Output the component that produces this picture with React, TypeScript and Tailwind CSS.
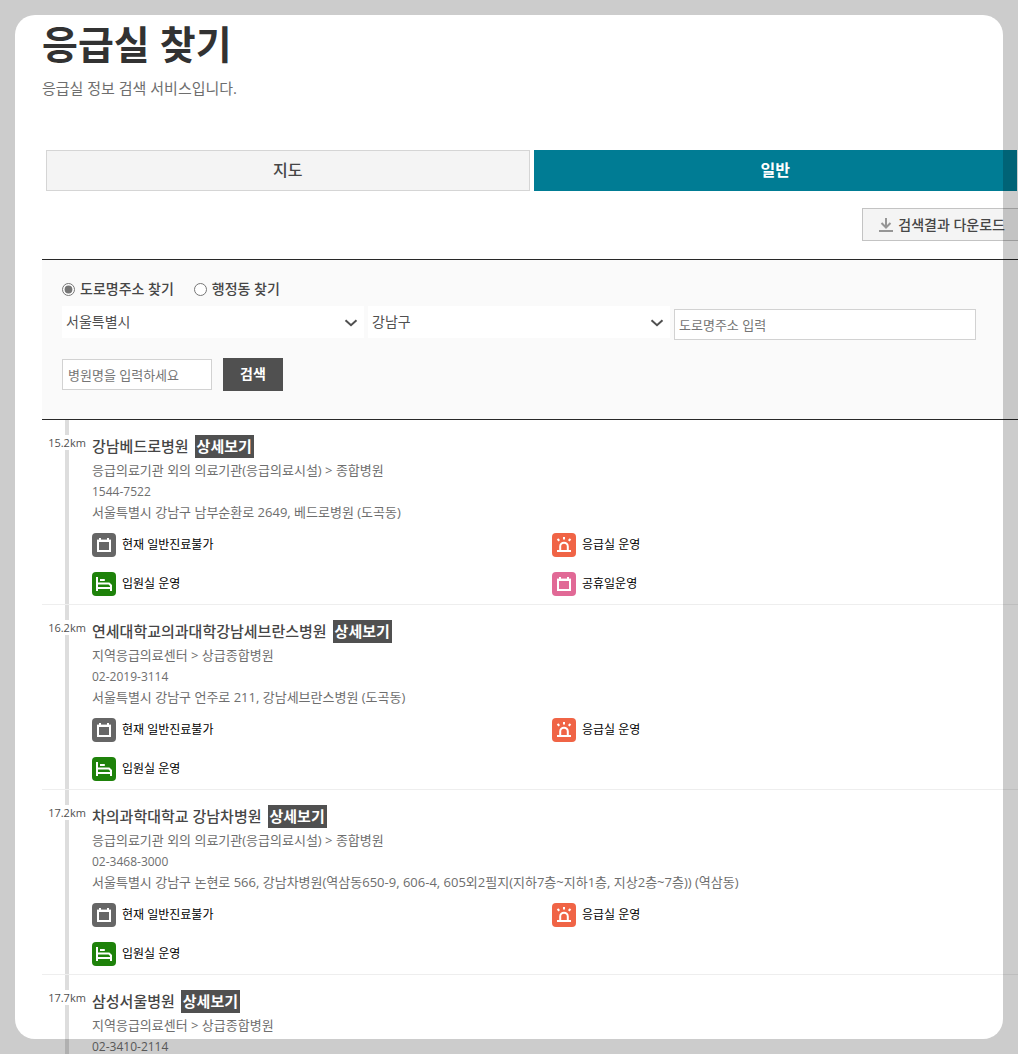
import React, { useState } from 'react';

type ServiceKind = 'closed' | 'emergency' | 'ward' | 'holiday';

interface Hospital {
  id: number;
  distance: string;
  name: string;
  category: string;
  phone: string;
  address: string;
  services: ServiceKind[];
}

const hospitals: Hospital[] = [
  {
    id: 1,
    distance: '15.2km',
    name: '강남베드로병원',
    category: '응급의료기관 외의 의료기관(응급의료시설) > 종합병원',
    phone: '1544-7522',
    address: '서울특별시 강남구 남부순환로 2649, 베드로병원 (도곡동)',
    services: ['closed', 'emergency', 'ward', 'holiday'],
  },
  {
    id: 2,
    distance: '16.2km',
    name: '연세대학교의과대학강남세브란스병원',
    category: '지역응급의료센터 > 상급종합병원',
    phone: '02-2019-3114',
    address: '서울특별시 강남구 언주로 211, 강남세브란스병원 (도곡동)',
    services: ['closed', 'emergency', 'ward'],
  },
  {
    id: 3,
    distance: '17.2km',
    name: '차의과학대학교 강남차병원',
    category: '응급의료기관 외의 의료기관(응급의료시설) > 종합병원',
    phone: '02-3468-3000',
    address: '서울특별시 강남구 논현로 566, 강남차병원(역삼동650-9, 606-4, 605외2필지(지하7층~지하1층, 지상2층~7층)) (역삼동)',
    services: ['closed', 'emergency', 'ward'],
  },
  {
    id: 4,
    distance: '17.7km',
    name: '삼성서울병원',
    category: '지역응급의료센터 > 상급종합병원',
    phone: '02-3410-2114',
    address: '서울특별시 강남구 일원로 81 (일원동)',
    services: ['closed', 'emergency', 'ward'],
  },
];

const services: Record<ServiceKind, { label: string; color: string }> = {
  closed: { label: '현재 일반진료불가', color: 'bg-[#666666]' },
  emergency: { label: '응급실 운영', color: 'bg-[#f06446]' },
  ward: { label: '입원실 운영', color: 'bg-[#1e820a]' },
  holiday: { label: '공휴일운영', color: 'bg-[#e16996]' },
};

function ServiceIcon({ kind }: { kind: ServiceKind }) {
  return (
    <span className={`w-6 h-6 rounded shrink-0 ${services[kind].color}`}>
      <svg viewBox="0 0 24 24" className="w-6 h-6" fill="none" stroke="#fff" strokeWidth="2" aria-hidden="true">
        {(kind === 'closed' || kind === 'holiday') && (
          <>
            <path d="M6 8h12v10H6z" />
            <path d="M5 7.8h14" strokeWidth="2.4" />
            <path d="M8 5v3M16 5v3" />
          </>
        )}
        {kind === 'emergency' && (
          <>
            <path d="M5 18h14" />
            <path d="M8.2 18v-4.5a3.8 3.8 0 0 1 7.6 0V18" />
            <path d="M12 4v2.5M5.5 6l1.8 1.8M18.5 6l-1.8 1.8" />
          </>
        )}
        {kind === 'ward' && (
          <>
            <path d="M5 5v14M5 16h14" />
            <path d="M5 11.5h12l2 2V19" />
            <path d="M8 8h4.8" />
          </>
        )}
      </svg>
    </span>
  );
}

function RegionSelect({ label, options }: { label: string; options: string[] }) {
  return (
    <div className="relative h-8 bg-white">
      <select aria-label={label} className="w-full h-8 pl-1 pr-6 appearance-none bg-white text-sm text-[#505050]">
        {options.map((o) => (
          <option key={o}>{o}</option>
        ))}
      </select>
      <svg
        viewBox="0 0 14 8"
        className="absolute right-1.5 top-[13px] w-[14px] h-2 pointer-events-none"
        fill="none"
        stroke="#505050"
        strokeWidth="2"
        aria-hidden="true"
      >
        <path d="M1.5 1.2 7 6.2l5.5-5" />
      </svg>
    </div>
  );
}

function HospitalItem({ hospital }: { hospital: Hospital }) {
  return (
    <li className="flex border-b border-[#eeeeee]">
      {/* Distance rail */}
      <div className="w-[50px] shrink-0 flex flex-col items-center">
        <span className="w-1 h-[15px] bg-[#dddddd]" />
        <span className="h-[15px] text-[11px] leading-[15px] text-[#505050]">{hospital.distance}</span>
        <span className="w-1 flex-1 bg-[#dddddd]" />
      </div>

      <div className="flex-1 pt-[15px] pb-2 pr-[10px]">
        <div className="flex items-center gap-1.5 mb-0.5">
          <h2 className="text-[15px] leading-[23px] font-medium text-[#464646]">{hospital.name}</h2>
          <button className="h-[23px] px-0.5 bg-[#505050] text-white text-[15px] leading-[23px] font-bold cursor-pointer">
            상세보기
          </button>
        </div>
        <div className="text-[13px] leading-[21px] text-[#6e6e6e]">
          <p>{hospital.category}</p>
          <p className="text-xs leading-[21px]">{hospital.phone}</p>
          <p>{hospital.address}</p>
        </div>
        <ul className="mt-[10px] grid grid-cols-2 gap-y-[15px]">
          {hospital.services.map((kind) => (
            <li key={kind} className="flex items-center gap-1.5 text-xs text-black">
              <ServiceIcon kind={kind} />
              {services[kind].label}
            </li>
          ))}
        </ul>
      </div>
    </li>
  );
}

export default function App() {
  const [mode, setMode] = useState('road');

  return (
    <div className="h-screen overflow-x-hidden overflow-y-auto [scrollbar-width:none] bg-white font-['Open_Sans','Noto_Sans_CJK_KR',sans-serif]">
      <main className="ml-[42px] -mr-1">
        <header className="pt-5">
          <h1 className="text-[39px] leading-[48px] font-bold text-[#323232]">응급실 찾기</h1>
          <p className="mt-[10px] text-[15px] leading-5 text-[#6e6e6e]">응급실 정보 검색 서비스입니다.</p>
        </header>

        <div className="mt-[52px] pl-1 pr-[5px] flex gap-1" role="tablist">
          <button
            role="tab"
            aria-selected="false"
            className="flex-1 h-[41px] pb-0.5 bg-[#f4f4f4] border border-[#d5d5d5] text-base font-medium text-[#464646] cursor-pointer"
          >
            지도
          </button>
          <button
            role="tab"
            aria-selected="true"
            className="flex-1 h-[41px] pb-0.5 bg-[#007c94] border border-[#007c94] text-base font-bold text-white cursor-pointer"
          >
            일반
          </button>
        </div>

        <div className="mt-[17px] flex justify-end">
          <button className="h-[33px] px-4 flex items-center gap-[5px] bg-[#f4f4f4] border border-[#c3c3c3] text-sm font-medium text-[#464646] cursor-pointer">
            <svg viewBox="0 0 14 14" className="w-[14px] h-[14px]" fill="none" stroke="#969696" strokeWidth="2" aria-hidden="true">
              <path d="M7 0v9M2.5 5 7 9.5 11.5 5M0 13h14" />
            </svg>
            검색결과 다운로드
          </button>
        </div>

        <form
          className="mt-[18px] pt-5 pb-7 pl-5 pr-[46px] bg-[#fafafa] border-y border-[#282828]"
          onSubmit={(e) => e.preventDefault()}
        >
          <div className="flex gap-5 text-sm leading-[18px] font-medium text-[#464646]">
            <label className="h-[18px] flex items-center gap-[5px]">
              <input type="radio" name="mode" checked={mode === 'road'} onChange={() => setMode('road')} className="w-[13px] h-[13px] accent-[#767676]" />
              도로명주소 찾기
            </label>
            <label className="h-[18px] flex items-center gap-[5px]">
              <input type="radio" name="mode" checked={mode === 'dong'} onChange={() => setMode('dong')} className="w-[13px] h-[13px] accent-[#767676]" />
              행정동 찾기
            </label>
          </div>

          <div className="mt-2 grid grid-cols-3 gap-1">
            <RegionSelect label="시도" options={['서울특별시']} />
            <RegionSelect label="시군구" options={['강남구']} />
            <input
              type="text"
              aria-label="도로명주소"
              placeholder="도로명주소 입력"
              className="min-w-0 mt-[3px] h-[31px] px-1 bg-white border border-[#d2d2d2] text-[13px] placeholder:text-[#757575]"
            />
          </div>

          <div className="mt-[18px] flex items-center gap-[11px]">
            <input
              type="text"
              aria-label="병원명"
              placeholder="병원명을 입력하세요"
              className="w-[150px] h-[31px] px-[5px] bg-white border border-[#d2d2d2] text-[13px] placeholder:text-[#757575]"
            />
            <button className="w-[60px] h-[33px] pb-0.5 bg-[#505050] text-sm font-bold text-white cursor-pointer">검색</button>
          </div>
        </form>

        <ul>
          {hospitals.map((h) => (
            <HospitalItem key={h.id} hospital={h} />
          ))}
        </ul>
      </main>

      {/* Dimmed frame around the viewport */}
      <div className="fixed inset-[15px] rounded-[20px] shadow-[0_0_0_40px_rgba(0,0,0,0.2)] pointer-events-none" />
    </div>
  );
}
